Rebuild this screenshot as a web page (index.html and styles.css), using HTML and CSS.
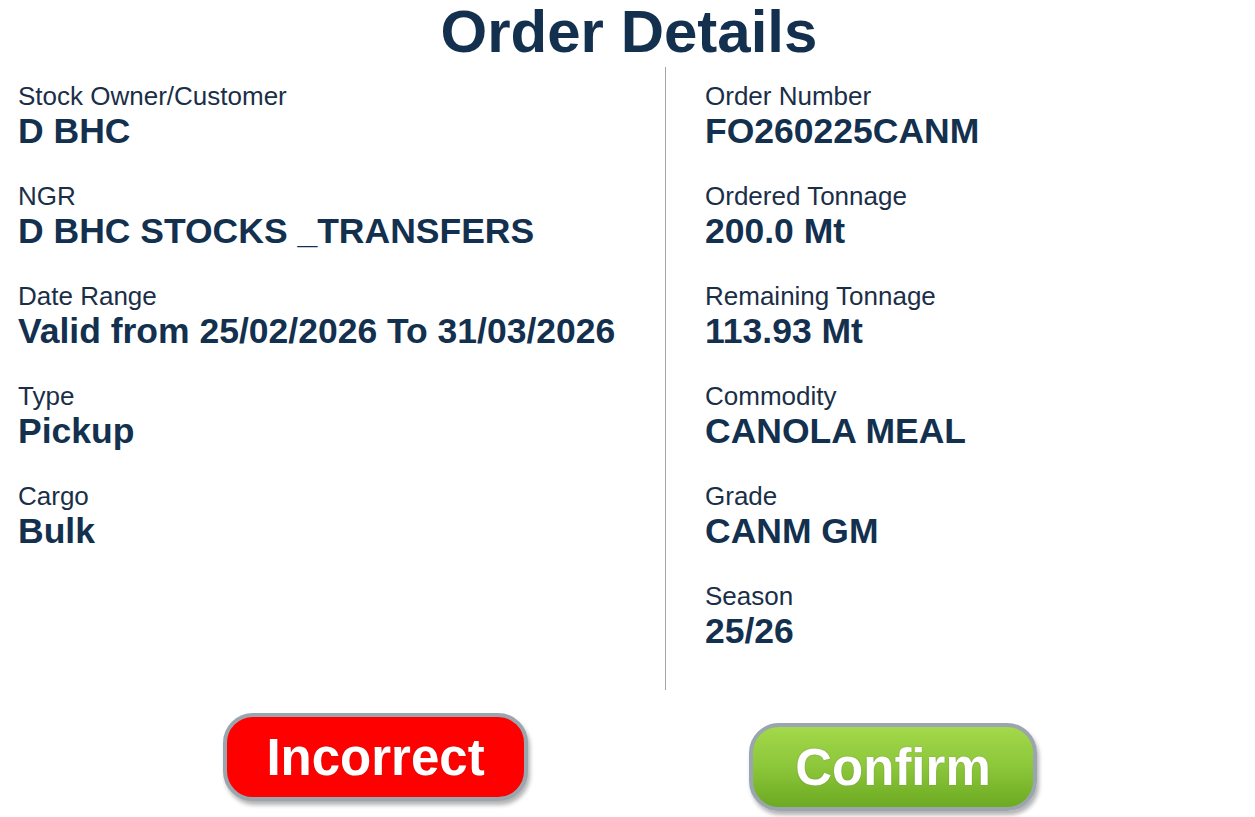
FILE: index.html
```html
<!DOCTYPE html>
<html>
<head>
<meta charset="utf-8">
<link rel="stylesheet" href="styles.css">
</head>
<body>
<h1 class="title">Order Details</h1>
<div class="columns">
  <div class="col col-left">
    <div class="field"><div class="label">Stock Owner/Customer</div><div class="value">D BHC</div></div>
    <div class="field"><div class="label">NGR</div><div class="value">D BHC STOCKS _TRANSFERS</div></div>
    <div class="field"><div class="label">Date Range</div><div class="value">Valid from 25/02/2026 To 31/03/2026</div></div>
    <div class="field"><div class="label">Type</div><div class="value">Pickup</div></div>
    <div class="field"><div class="label">Cargo</div><div class="value">Bulk</div></div>
  </div>
  <div class="col col-right">
    <div class="field"><div class="label">Order Number</div><div class="value">FO260225CANM</div></div>
    <div class="field"><div class="label">Ordered Tonnage</div><div class="value">200.0 Mt</div></div>
    <div class="field"><div class="label">Remaining Tonnage</div><div class="value">113.93 Mt</div></div>
    <div class="field"><div class="label">Commodity</div><div class="value">CANOLA MEAL</div></div>
    <div class="field"><div class="label">Grade</div><div class="value">CANM GM</div></div>
    <div class="field"><div class="label">Season</div><div class="value">25/26</div></div>
  </div>
</div>
<div class="actions">
  <button class="btn btn-incorrect">Incorrect</button>
  <button class="btn btn-confirm">Confirm</button>
</div>
</body>
</html>
```
FILE: styles.css
```css
html, body {
  margin: 0;
  padding: 0;
  background: #ffffff;
}
body {
  font-family: "Liberation Sans", Arial, sans-serif;
  color: #13304e;
  width: 1255px;
  height: 817px;
  overflow: hidden;
}
.title {
  margin: 0;
  height: 64px;
  font-size: 60px;
  line-height: 64px;
  font-weight: bold;
  text-align: center;
  padding-left: 3px;
  color: #13304e;
}
.columns {
  display: flex;
  margin-top: 3px;
}
.col {
  display: flex;
  flex-direction: column;
  gap: 30px;
  padding-top: 14px;
  padding-bottom: 39px;
}
.col-left {
  width: 647px;
  padding-left: 18px;
  border-right: 1px solid #a6a6a6;
}
.col-right {
  padding-left: 39px;
}
.field {
  display: flex;
  flex-direction: column;
}
.label {
  font-size: 26px;
  line-height: 30px;
  height: 30px;
  color: #1a2f47;
  white-space: nowrap;
}
.value {
  font-size: 35.5px;
  line-height: 40px;
  height: 40px;
  font-weight: bold;
  color: #13304e;
  white-space: nowrap;
}
.actions {
  display: flex;
  align-items: flex-start;
  padding-left: 223px;
  gap: 221px;
  margin-top: 23px;
}
.btn {
  font-family: "Liberation Sans", Arial, sans-serif;
  font-weight: bold;
  font-size: 51px;
  color: #ffffff;
  border: 4px solid #9ba5ad;
  border-radius: 30px;
  height: 88px;
  padding: 0;
  box-shadow: 2px 4px 4px rgba(0, 0, 0, 0.3);
  text-shadow: 0 0 1px rgba(60, 60, 60, 0.6);
  cursor: pointer;
}
.btn-incorrect {
  width: 305px;
  background: #ff0000;
}
.btn-confirm {
  width: 288px;
  margin-top: 10px;
  background: linear-gradient(to bottom, #a3d94a 0%, #8cc63a 50%, #6caa22 100%);
}
```
